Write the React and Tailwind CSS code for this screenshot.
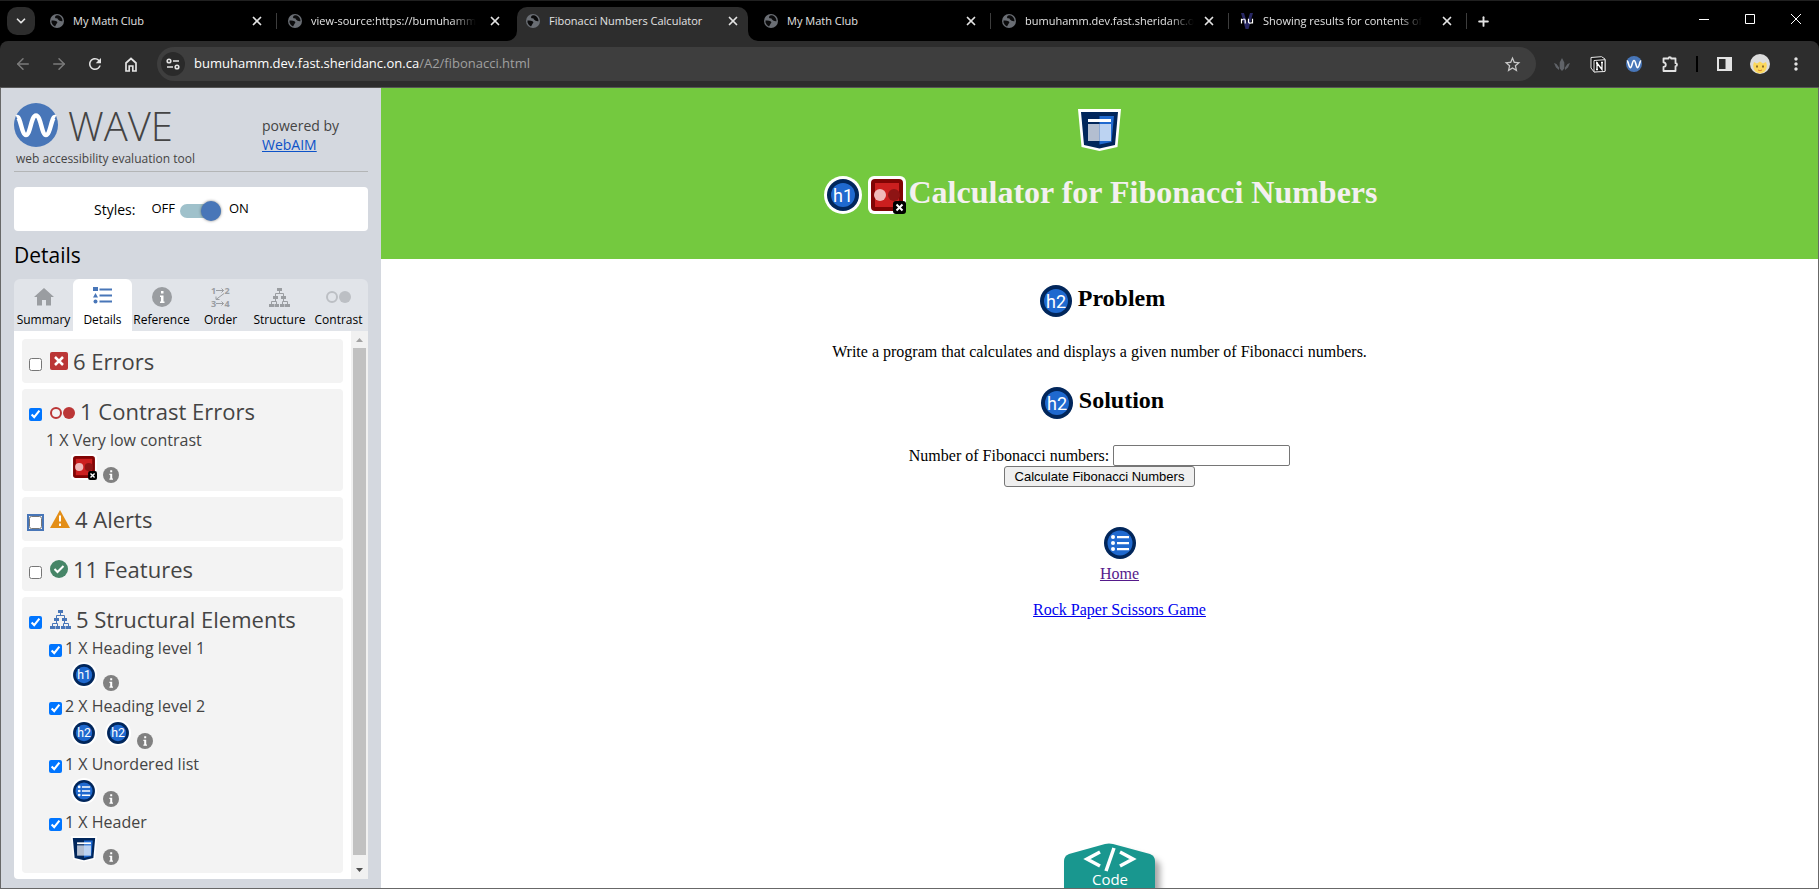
import React from "react";
import { ChevronDown, X, Plus, ArrowLeft, ArrowRight } from "lucide-react";
import { MdRefresh, MdOutlineHome, MdStarBorder, MdMoreVert } from "react-icons/md";

function Globe() {
  return (
    <svg viewBox="0 0 14 14" className="size-[14px] shrink-0">
      <circle cx="7" cy="7" r="7" fill="#6a6e74" />
      <path d="M1.500 6.500Q4.500 6 7 7.500q1 1.500-.5 2.200-.5 1.300-1.500 2.800-2.500-1-3.500-4z" fill="#0b0b0c" />
      <path d="M6 1.500Q4 3 5.500 4.200 8 4 8 5.500 9.500 7.500 12.500 7.200 12.300 3 9 1.500 7.500 1 6 1.500" fill="#0b0b0c" />
    </svg>
  );
}

function NuIcon() {
  return (
    <svg viewBox="0 0 14 16" className="h-4 w-[14px] shrink-0">
      <path d="M1 0h3l3 10 3-10h3L8.500 16h-3z" fill="#272763" />
      <path d="M1.500 10.500V5.800M1.500 7.500Q4.800 4.500 5.200 7.500V10.500M8.500 5.800V9Q9 11 12.500 9.500M12.500 5.800V10.500" fill="none" stroke="#fff" strokeWidth="1.200" />
    </svg>
  );
}

function PuzzleIcon() {
  return (
    <svg viewBox="0 0 18 18" className="size-[18px]">
      <path d="M2.500 3.500h5a1.300 1.300 0 0 1 2.600 0h4.400v4.700a1.500 1.500 0 0 1 0 3V16h-12v-4q2.300-.3 2.300-2.300T2.500 7.400z" fill="none" stroke="currentColor" strokeWidth="1.800" strokeLinejoin="round" />
    </svg>
  );
}

function WaveMark({ className }) {
  return (
    <svg viewBox="0 0 44 44" className={className}>
      <circle cx="22" cy="22" r="22" fill="#4876b8" />
      <path d="M2.500 14C6.500 12 7.500 32 12 32S17 12.500 22 12.500 27.500 32 32 32 37.500 12 41.500 14" fill="none" stroke="#fff" strokeWidth="4.400" />
    </svg>
  );
}

function StructureIcon({ className }) {
  return (
    <svg viewBox="0 0 21 19" className={className} fill="currentColor">
      <path d="M8 0h5v3H8zM4 8h5v3H4zM12 8h5v3h-5zM0 16h5v3H0zM5.500 16h4.500v3H5.500zM11 16h4.500v3H11zM16 16h5v3h-5z" />
      <path d="M10.500 3v2.500M6.500 8V5.500h8V8M2.500 16v-2.500h5V16M6.500 11v2.500M14.500 11v2.500M13.500 16v-2.500h5V16" fill="none" stroke="currentColor" />
    </svg>
  );
}

function InfoIcon({ className }) {
  return (
    <svg viewBox="0 0 20 20" className={className}>
      <circle cx="10" cy="10" r="10" fill="currentColor" />
      <path d="M9 4h2.500v2.500H9zM8 8.500h3.500v6H12.500V16H8v-1.500h1V10H8z" fill="#fff" />
    </svg>
  );
}

function HeadingIcon({ level, className }) {
  return (
    <svg viewBox="0 0 38 38" className={className}>
      <circle cx="19" cy="19" r="19" fill="#fff" />
      <circle cx="19" cy="19" r="16" fill="#01265b" />
      <circle cx="19" cy="19" r="12" fill="#1f69cf" />
      <text x="19" y="25.500" textAnchor="middle" fontSize="18" fill="#fff" className="font-['Roboto',sans-serif] font-normal">h{level}</text>
    </svg>
  );
}

function ListIcon({ className }) {
  return (
    <svg viewBox="0 0 38 38" className={className}>
      <circle cx="19" cy="19" r="19" fill="#fff" />
      <circle cx="19" cy="19" r="16" fill="#01265b" />
      <circle cx="19" cy="19" r="12.500" fill="#1f69cf" />
      <g fill="#fff">
        <circle cx="12" cy="13" r="2" /><circle cx="12" cy="19" r="2" /><circle cx="12" cy="25" r="2" />
        <path d="M16 12h12v2.200H16zM16 18h12v2.200H16zM16 24h12v2.200H16z" />
      </g>
    </svg>
  );
}

function HeaderIcon({ className }) {
  return (
    <svg viewBox="0 0 43 42" className={className}>
      <path d="M0 0h43l-3.500 38L21.500 42 3.500 38z" fill="#fff" />
      <path d="M3 3h37l-3 33-15.500 3.500L6 36z" fill="#01265b" />
      <path d="M21.500 7H36l-2.500 26-12 2.500z" fill="#1f69cf" />
      <path d="M10 10h23v3H10z" fill="#fff" />
      <path d="M10 15h11.500v17H10z" fill="#b3bed0" />
      <path d="M21.500 15H33v17H21.500z" fill="#bcd3f2" />
    </svg>
  );
}

function ContrastIcon({ className }) {
  return (
    <svg viewBox="0 0 38 38" className={className}>
      <rect width="38" height="38" rx="6" fill="#fff" />
      <rect x="3" y="3" width="32" height="32" rx="4" fill="#810404" />
      <rect x="7" y="7" width="24" height="24" fill="#cc1f1f" />
      <circle cx="12" cy="19" r="6" fill="#f0b9b9" />
      <circle cx="26" cy="19" r="6" fill="#8e1414" />
      <rect x="25" y="25" width="13" height="13" rx="3" fill="#000" />
      <path d="m28.500 28.500 6 6m0-6-6 6" stroke="#fff" strokeWidth="2" />
    </svg>
  );
}

function CirclesIcon({ className }) {
  return (
    <svg viewBox="0 0 25 12" className={className}>
      <circle cx="6" cy="6" r="5" fill="none" stroke="currentColor" strokeWidth="2" />
      <circle cx="19" cy="6" r="6" fill="currentColor" />
    </svg>
  );
}

function HomeIcon({ className }) {
  return (
    <svg viewBox="0 0 20 18" className={className} fill="currentColor">
      <path d="M10 0 0 9h3v8.500h5V12h4v5.500h5V9h3z" />
    </svg>
  );
}

function DetailsIcon({ className }) {
  return (
    <svg viewBox="0 0 19 17" className={className} fill="currentColor">
      <path d="M0 0h5v4H0zM2.500 6 5 10.500H0zM6.500 1.500H19v2H6.500zM6.500 7.500H19v2H6.500zM6.500 13.500H19v2H6.500z" />
      <circle cx="2.500" cy="14.500" r="2" />
    </svg>
  );
}

function OrderIcon({ className }) {
  return (
    <svg viewBox="-3 -4 25 28" className={className}>
      <g fill="currentColor" fontSize="9" fontWeight="700" className="font-['Open_Sans',sans-serif]">
        <text x="0" y="6.500">1</text><text x="13.500" y="6.500">2</text><text x="0" y="19.500">3</text><text x="13.500" y="19.500">4</text>
      </g>
      <path d="M5 3.500h7.500M10.500 1.500l2 2-2 2M5 16.500h7.500M10.500 14.500l2 2-2 2M13 6.500l-8 6M5 9.500v3h3.500" fill="none" stroke="currentColor" />
    </svg>
  );
}

const browserTabs = [
  { title: "My Math Club", icon: Globe, divider: true },
  { title: "view-source:https://bumuhamm", icon: Globe, fade: true },
  { title: "Fibonacci Numbers Calculator", icon: Globe, active: true },
  { title: "My Math Club", icon: Globe, divider: true },
  { title: "bumuhamm.dev.fast.sheridanc.o", icon: Globe, divider: true, fade: true },
  { title: "Showing results for contents of", icon: NuIcon, divider: true, fade: true },
];

function BrowserTab({ tab }) {
  const Icon = tab.icon;
  return (
    <div className={tab.active ? "relative mr-[7px] flex h-[34px] w-[231px] min-w-0 items-center rounded-t-[10px] bg-[#2d2d2d] pr-2 pb-[6px] pl-[9px]" : "relative flex h-[34px] w-[238px] min-w-0 items-center pr-[15px] pb-[6px] pl-[9px]"}>
      {tab.active && (
        <>
          <svg viewBox="0 0 10 10" className="absolute bottom-0 -left-[10px] size-[10px]"><path d="M10 0v10H0A10 10 0 0 0 10 0" fill="#2d2d2d" /></svg>
          <svg viewBox="0 0 10 10" className="absolute -right-[10px] bottom-0 size-[10px]"><path d="M0 0v10h10A10 10 0 0 1 0 0" fill="#2d2d2d" /></svg>
        </>
      )}
      <Icon />
      <span className={tab.fade ? "ml-[9px] whitespace-nowrap [mask-image:linear-gradient(to_right,black_85%,transparent)]" : "ml-[9px] whitespace-nowrap"}>{tab.title}</span>
      <button aria-label="Close tab" className="ml-auto shrink-0"><X size={14} strokeWidth={3} /></button>
      {tab.divider && <span className="absolute right-[2px] h-4 w-px bg-[#3d3d3d]" />}
    </div>
  );
}

function Browser() {
  return (
    <header className="bg-black font-['Open_Sans',sans-serif] text-[11px] text-[#e3e3e3]">
      <div className="flex h-[41px] items-end border-t border-[#202020]">
        <div className="flex h-[34px] w-[41px] shrink-0 items-start pl-[7px]">
          <button aria-label="Search tabs" className="grid size-7 place-items-center rounded-[10px] bg-[#2d2d2d]"><ChevronDown size={14} strokeWidth={3} /></button>
        </div>
        {browserTabs.map((t, i) => <BrowserTab key={i} tab={t} />)}
        <button aria-label="New tab" className="ml-[2px] grid h-[34px] w-6 shrink-0 place-items-center pb-[6px]"><Plus size={15} strokeWidth={3} /></button>
        <div className="ml-auto flex h-[40px] pb-1 text-white">
          <button aria-label="Minimize" className="grid w-[46px] place-items-center"><svg viewBox="0 0 10 10" className="size-[10px]"><path d="M0 5.500h10" stroke="currentColor" /></svg></button>
          <button aria-label="Maximize" className="grid w-[46px] place-items-center"><svg viewBox="0 0 10 10" className="size-[10px]"><path d="M.5.5h9v9h-9z" fill="none" stroke="currentColor" /></svg></button>
          <button aria-label="Close" className="grid w-[46px] place-items-center"><svg viewBox="0 0 10 10" className="size-[10px]"><path d="m0 0 10 10M10 0 0 10" stroke="currentColor" /></svg></button>
        </div>
      </div>
      <div className="flex h-[47px] items-center rounded-t-lg border-b border-[#565656] bg-[#2d2d2d] pr-[5px]">
        <div className="flex w-[157px] shrink-0 items-center pl-[5px]">
          <button aria-label="Back" className="grid w-9 place-items-center text-[#7b7b7b]"><ArrowLeft size={18} /></button>
          <button aria-label="Forward" className="grid w-9 place-items-center text-[#7b7b7b]"><ArrowRight size={18} /></button>
          <button aria-label="Reload" className="grid w-9 place-items-center"><MdRefresh size={18} /></button>
          <button aria-label="Home" className="grid w-9 place-items-center">
            <svg viewBox="0 0 14 15" className="h-[15px] w-[14px]"><path d="M2 6l5-4.500L12 6v8H8.800V9H5.200v5H2z" fill="none" stroke="currentColor" strokeWidth="1.700" /></svg>
          </button>
        </div>
        <div className="flex h-[34px] flex-1 items-center rounded-full bg-[#3e3e3e] pr-[14px] pl-1">
          <button aria-label="Site information" className="grid size-6 place-items-center rounded-full bg-[#2a2a2a]">
            <svg viewBox="0 0 14 12" className="h-3 w-[14px]" fill="none" stroke="currentColor" strokeWidth="1.600"><circle cx="3" cy="3" r="1.800" /><path d="M7 3h6M1 9h6" /><circle cx="11" cy="9" r="1.800" /></svg>
          </button>
          <span className="ml-[9px] flex-1 text-[13px] text-[#a0a0a0]"><span className="text-white">bumuhamm.dev.fast.sheridanc.on.ca</span>/A2/fibonacci.html</span>
          <button aria-label="Bookmark" className="text-[#c7c7c7]"><MdStarBorder size={19} /></button>
        </div>
        <div className="ml-2 flex items-center">
          <span className="grid w-9 place-items-center">
            <svg viewBox="0 0 16 13" className="h-[13px] w-4" fill="#606368"><path d="m8 0 2.300 4.500v6L8 13l-2.300-2.500v-6zM0 5l2.500 1L5 9.500V12L2 9.500zM16 5l-2.500 1L11 9.500V12l3-2.500z" /></svg>
          </span>
          <span className="grid w-9 place-items-center">
            <svg viewBox="0 0 16 17" className="h-[17px] w-4"><path d="M1 1.500 11.500.7 15 3v12l-11 .8L1 12z" fill="#161616" stroke="#e8e8e8" /><path d="M4 4.500 15 3.700V15.500l-11 .5z" fill="#161616" stroke="#e8e8e8" /><path d="M7 13.500V7l5 6.500V6.500M6 7h2M11 6.500h2M6 13.500h2" fill="none" stroke="#fff" strokeWidth="1.300" /></svg>
          </span>
          <span className="grid w-9 place-items-center"><WaveMark className="size-4" /></span>
          <button aria-label="Extensions" className="grid w-9 place-items-center"><PuzzleIcon /></button>
          <span className="mx-2 h-4 w-[2px] bg-black" />
          <button aria-label="Side panel" className="grid w-9 place-items-center">
            <svg viewBox="0 0 15 14" className="h-[14px] w-[15px]"><path d="M1 1h13v12H1z" fill="none" stroke="currentColor" strokeWidth="2" /><path d="M8.500 1H14v12H8.500z" fill="currentColor" /></svg>
          </button>
          <button aria-label="Profile" className="grid w-9 place-items-center">
            <svg viewBox="0 0 20 20" className="size-5"><circle cx="10" cy="10" r="10" fill="#dcdcdc" /><path d="M4 8l3 1.500L10 7.500l3 2L16 8q1.500 3 .5 6-1 4.500-6.500 5.500-5.500-1-6.500-5.500-1-3 .5-6" fill="#fbd75b" /><path d="M7 11.500v2M13 11.500v2" stroke="#6b4a1c" strokeWidth="1.500" /><path d="M8 16q2 1.500 4 0" fill="none" stroke="#d9822b" /></svg>
          </button>
          <button aria-label="Menu" className="grid w-9 place-items-center"><MdMoreVert size={20} /></button>
        </div>
      </div>
    </header>
  );
}

const panelTabs = [
  { label: "Summary", icon: <HomeIcon className="h-[18px] w-5" /> },
  { label: "Details", icon: <DetailsIcon className="mb-[3px] h-[17px] w-[19px]" />, active: true },
  { label: "Reference", icon: <InfoIcon className="size-5" /> },
  { label: "Order", icon: <OrderIcon className="h-7 w-[25px]" /> },
  { label: "Structure", icon: <StructureIcon className="h-[19px] w-[21px]" /> },
  { label: "Contrast", icon: <CirclesIcon className="h-3 w-[25px] text-[#bcbfc4]" /> },
];

function Check({ label, ...props }) {
  return <input type="checkbox" aria-label={label} className="size-[13px] shrink-0 accent-[#0075ff]" {...props} />;
}

function Group({ title, icon, checked, focused, children }) {
  return (
    <section className="rounded bg-[#f3f3f3] pr-2 pl-[7px]">
      <label className="flex h-11 items-center">
        <span className={focused ? "mt-[6px] grid outline-2 outline-offset-0 outline-[#4876b8]" : "mt-[6px] grid"}>
          <Check label={title} defaultChecked={checked} />
        </span>
        <span className="ml-2">{icon}</span>
        <span className="ml-[5px] text-[22px] text-[#444]">{title}</span>
      </label>
      {children}
    </section>
  );
}

function Item({ title, icons, checkbox }) {
  return (
    <li className="h-[58px]">
      <label className={checkbox ? "flex h-6 items-center gap-[3px] pl-5" : "flex h-6 items-center pl-[17px]"}>
        {checkbox && <span className="mt-1 grid"><Check label={title} defaultChecked /></span>}
        <span className="text-[16px] text-[#444]">{title}</span>
      </label>
      <div className="mt-[2px] flex h-[26px] gap-2 pl-[42px]">
        {icons}
        <button aria-label={"About " + title} className="mt-[13px] -ml-0.5 h-4 text-[#808080]"><InfoIcon className="size-4" /></button>
      </div>
    </li>
  );
}

function Sidebar() {
  return (
    <aside className="flex w-[380px] shrink-0 flex-col bg-[#d4d8df] px-[13px] pb-[9px] font-['Open_Sans',sans-serif]">
      <div className="flex h-[84px] border-b border-[#b3b5b6] pt-[15px]">
        <div className="w-[248px]">
          <div className="flex h-11 items-center gap-[10px]">
            <WaveMark className="size-11" />
            <span className="pt-[2px] text-[40px] leading-[44px] font-light text-[#444]">WAVE</span>
          </div>
          <p className="pl-[2px] text-[12px] leading-6 text-[#444]">web accessibility evaluation tool</p>
        </div>
        <p className="pt-[13px] text-[14px] leading-[19px] text-[#444]">powered by<br /><a href="#webaim" className="text-[#0c52c8] underline">WebAIM</a></p>
      </div>
      <div className="mt-[15px] flex h-11 items-center rounded bg-white pl-20 text-[13px]">
        <span className="mr-4 text-[14px]">Styles:</span>
        <span>OFF</span>
        <button role="switch" aria-checked="true" aria-label="Styles" className="relative mx-[5px] mt-1 h-[14px] w-[41px] rounded-full bg-[#9fc1cb]">
          <span className="absolute -top-[3px] right-0 size-5 rounded-full bg-[#4876b8] shadow-[0_0_3px_rgba(0,0,0,0.5)]" />
        </button>
        <span className="ml-[3px]">ON</span>
      </div>
      <h2 className="h-12 text-[21px] leading-[48px]">Details</h2>
      <nav className="grid h-[52px] grid-cols-6 overflow-hidden rounded-t-md bg-[#e1e4e9]">
        {panelTabs.map((t) => (
          <button key={t.label} className={t.active ? "flex flex-col items-center rounded-t-md bg-white text-[#4876b8]" : "flex flex-col items-center text-[#9a9da1]"}>
            <span className="grid h-8 place-items-center pt-1">{t.icon}</span>
            <span className="text-[12px] leading-[18px] text-black">{t.label}</span>
          </button>
        ))}
      </nav>
      <div className="flex min-h-0 flex-1 rounded-bl bg-white">
        <div className="flex flex-1 flex-col gap-[6px] p-2">
          <Group title="6 Errors" icon={<svg viewBox="0 0 18 18" className="size-[18px]"><rect width="18" height="18" rx="2" fill="#bb3636" /><path d="m5 5 8 8m0-8-8 8" stroke="#fff" strokeWidth="2.500" /></svg>} />
          <Group title="1 Contrast Errors" checked icon={<CirclesIcon className="mt-1 h-3 w-[25px] text-[#bb3636]" />}>
            <ul className="-mt-[5px] pb-[5px]"><Item title="1 X Very low contrast" icons={<ContrastIcon className="size-[26px]" />} /></ul>
          </Group>
          <Group title="4 Alerts" focused icon={<svg viewBox="0 0 20 18" className="h-[18px] w-5"><path d="m10 0 10 18H0z" fill="#e38e17" /><path d="M9 5.500h2v6H9zM9 13.500h2v2.500H9z" fill="#fff" /></svg>} />
          <Group title="11 Features" icon={<svg viewBox="0 0 18 18" className="size-[18px]"><circle cx="9" cy="9" r="9" fill="#468567" /><path d="m4.500 9 3 3 6-6" fill="none" stroke="#fff" strokeWidth="2" /></svg>} />
          <Group title="5 Structural Elements" checked icon={<StructureIcon className="h-[19px] w-[21px] text-[#4876b8]" />}>
            <ul className="-mt-[5px] pb-[5px]">
              <Item checkbox title="1 X Heading level 1" icons={<HeadingIcon level="1" className="size-[26px]" />} />
              <Item checkbox title="2 X Heading level 2" icons={<><HeadingIcon level="2" className="size-[26px]" /><HeadingIcon level="2" className="size-[26px]" /></>} />
              <Item checkbox title="1 X Unordered list" icons={<ListIcon className="size-[26px]" />} />
              <Item checkbox title="1 X Header" icons={<HeaderIcon className="size-[26px]" />} />
            </ul>
          </Group>
        </div>
        <div className="flex w-[17px] flex-col items-center bg-[#f1f1f1]">
          <svg viewBox="0 0 17 17" className="size-[17px]"><path d="M5 11h7L8.500 7z" fill="#a3a3a3" /></svg>
          <div className="w-[13px] flex-1 bg-[#c1c1c1]" />
          <svg viewBox="0 0 17 24" className="h-6 w-[17px]"><path d="M5 13h7l-3.500 4z" fill="#505050" /></svg>
        </div>
      </div>
    </aside>
  );
}

function Page() {
  return (
    <main className="relative flex-1 overflow-hidden bg-white text-center font-['Liberation_Serif',serif] text-[16px] leading-[18px] text-black">
      <div className="flex h-[171px] flex-col items-center bg-[#74c93f] pt-[21px]">
        <HeaderIcon className="h-[42px] w-[43px]" />
        <h1 className="mt-[19px] flex items-center pl-[2px] text-[32px] leading-[37px] font-bold text-[#f4f0f0]">
          <HeadingIcon level="1" className="mt-[6px] mr-[6px] size-[38px]" />
          <ContrastIcon className="mt-[6px] mr-[3px] size-[38px]" />
          Calculator for Fibonacci Numbers
        </h1>
      </div>
      <h2 className="mt-[23px] flex items-start justify-center gap-[3px] pl-[3px] text-[24px] font-bold"><HeadingIcon level="2" className="size-[38px]" /><span className="leading-8">Problem</span></h2>
      <p className="mt-[23px]">Write a program that calculates and displays a given number of Fibonacci numbers.</p>
      <h2 className="mt-[23px] flex items-start justify-center gap-[3px] pl-[3px] text-[24px] font-bold"><HeadingIcon level="2" className="size-[38px]" /><span className="leading-8">Solution</span></h2>
      <form className="mt-[23px] flex flex-col items-center">
        <div className="flex items-center gap-1">
          <label htmlFor="count">Number of Fibonacci numbers:</label>
          <input id="count" type="text" className="h-[21px] w-[177px] rounded-[2px] border border-[#767676] bg-white px-1" />
        </div>
        <button type="button" className="h-[21px] rounded-[3px] border border-[#767676] bg-[#efefef] px-[10px] font-['Liberation_Sans',sans-serif] text-[13px] leading-[19px]">Calculate Fibonacci Numbers</button>
      </form>
      <nav className="mt-[37px] flex flex-col items-center pl-10">
        <ListIcon className="size-[38px]" />
        <a href="#home" className="mt-[3px] text-[#551a8b] underline">Home</a>
        <a href="#rps" className="mt-[18px] text-[#0000ee] underline">Rock Paper Scissors Game</a>
      </nav>
      <button className="absolute bottom-0 left-1/2 ml-[-36px] h-[45px] w-[91px] text-white">
        <svg viewBox="0 0 91 45" className="absolute inset-0 h-[45px] w-[91px] overflow-visible">
          <path d="M0 60V18Q0 13 5 11L41 1q4-1 8 0l37 10q5 2 5 7v42z" fill="#19978f" className="drop-shadow-[5px_6px_3px_rgba(0,0,0,0.35)]" />
          <path d="M36 9 23 16l13 7M56 9l13 7-13 7M50 5l-8 23" fill="none" stroke="#fff" strokeWidth="3.500" />
        </svg>
        <span className="relative block pt-[26px] pl-[2px] font-['Open_Sans',sans-serif] text-[15px] leading-5">Code</span>
      </button>
    </main>
  );
}

export default function App() {
  return (
    <div className="flex h-screen flex-col overflow-hidden">
      <Browser />
      <div className="flex min-h-0 flex-1 border-r border-b border-l border-[#686868]">
        <Sidebar />
        <Page />
      </div>
    </div>
  );
}
